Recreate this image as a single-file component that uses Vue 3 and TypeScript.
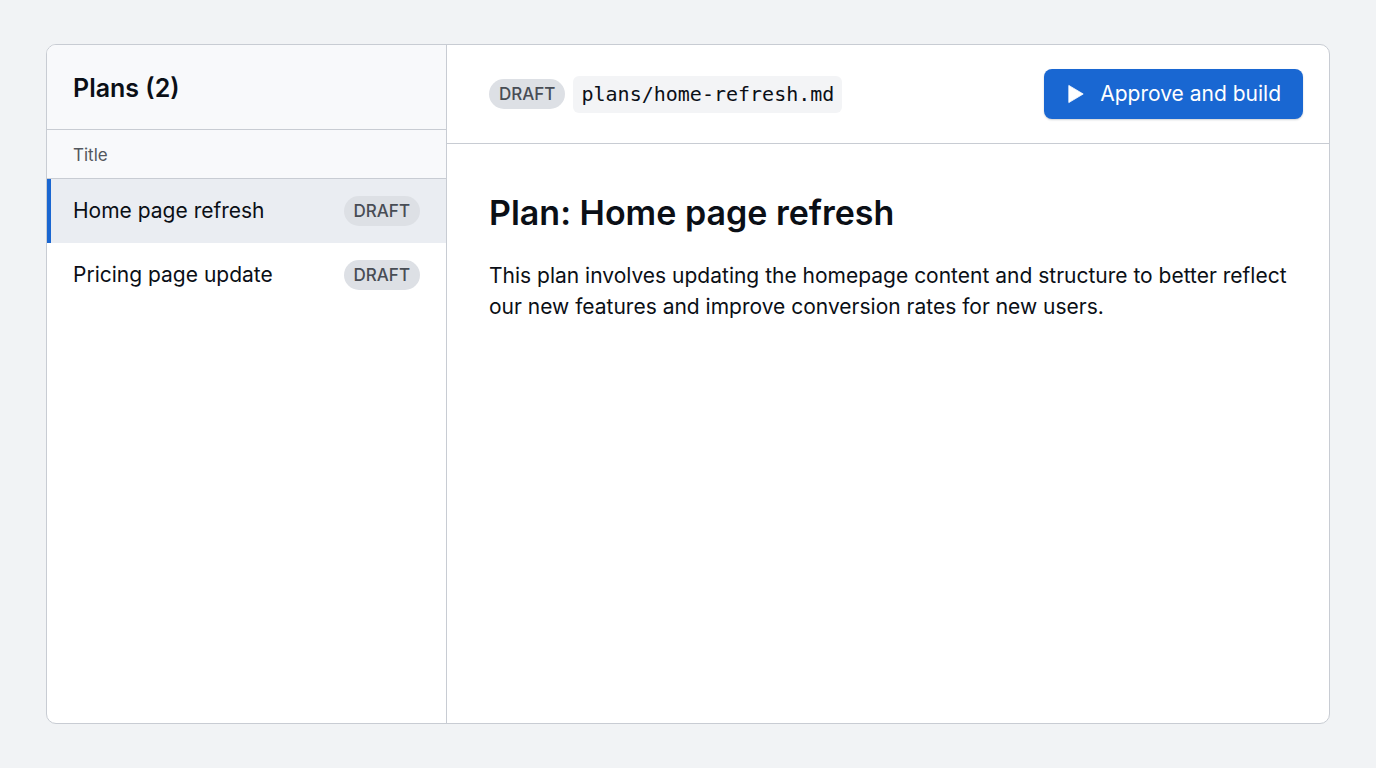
<script setup lang="ts">
import { ref, computed } from 'vue'

interface Plan {
  title: string
  status: string
  file: string
  body: string
}

const plans: Plan[] = [
  {
    title: 'Home page refresh',
    status: 'DRAFT',
    file: 'plans/home-refresh.md',
    body: 'This plan involves updating the homepage content and structure to better reflect our new features and improve conversion rates for new users.',
  },
  { title: 'Pricing page update', status: 'DRAFT', file: 'plans/pricing-update.md', body: '' },
]

const selected = ref(0)
const current = computed(() => plans[selected.value])
</script>

<template>
  <div class="page">
    <main class="window">
      <aside class="sidebar">
        <h2 class="sidebar-title">Plans ({{ plans.length }})</h2>
        <div class="column-label">Title</div>
        <ul class="list">
          <li v-for="(plan, i) in plans" :key="plan.file">
            <button
              type="button"
              class="row"
              :class="{ active: i === selected }"
              :aria-pressed="i === selected"
              @click="selected = i"
            >
              <span>{{ plan.title }}</span>
              <span class="badge">{{ plan.status }}</span>
            </button>
          </li>
        </ul>
      </aside>
      <section class="detail">
        <header class="toolbar">
          <span class="badge">{{ current.status }}</span>
          <code class="file">{{ current.file }}</code>
          <button type="button" class="approve">
            <svg width="16" height="20" viewBox="0 0 16 20" aria-hidden="true">
              <path d="M0.8 1.4v17.2L15.2 10z" fill="currentColor" stroke="currentColor" stroke-width="0.8" stroke-linejoin="round" />
            </svg>
            <span>Approve and build</span>
          </button>
        </header>
        <article class="content">
          <h1>Plan: {{ current.title }}</h1>
          <p>{{ current.body }}</p>
        </article>
      </section>
    </main>
  </div>
</template>

<style>
body {
  background: #f1f3f5;
}
</style>

<style scoped>
.page {
  box-sizing: border-box;
  min-height: 100vh;
  padding: 44px 46px;
  display: flex;
  background: #f1f3f5;
  color: #0b0f16;
  font-family: Inter, "Liberation Sans", sans-serif;
  font-size: 21px;
}
.window {
  flex: 1;
  display: grid;
  grid-template-columns: 400px minmax(0, 1fr);
  background: #fff;
  border: 1px solid #c8ccd3;
  border-radius: 10px;
  overflow: hidden;
}
.sidebar {
  border-right: 1px solid #c8ccd3;
}
.sidebar-title {
  margin: 0;
  padding: 27px 26px 25px;
  font-size: 25px;
  line-height: 32px;
  font-weight: 600;
  background: #f8f9fb;
  border-bottom: 1px solid #c8ccd3;
}
.column-label {
  padding: 13px 26px 11px;
  font-size: 17px;
  line-height: 24px;
  color: #53575e;
  background: #f8f9fb;
  border-bottom: 1px solid #c8ccd3;
}
.list {
  list-style: none;
  margin: 0;
  padding: 0;
}
.row {
  width: 100%;
  display: flex;
  align-items: center;
  justify-content: space-between;
  padding: 16px 26px 16px 22px;
  border: 0;
  border-left: 4px solid transparent;
  background: none;
  color: inherit;
  font: inherit;
  line-height: 32px;
  text-align: left;
  cursor: pointer;
}
.row.active {
  background: #eaedf2;
  border-left-color: #1a66d1;
}
.badge {
  padding: 0 10px;
  border-radius: 15px;
  background: #dde0e5;
  color: #484d55;
  font-size: 17px;
  line-height: 30px;
  font-weight: 500;
}
.toolbar {
  display: flex;
  align-items: center;
  gap: 8px;
  padding: 24px 26px 24px 42px;
  border-bottom: 1px solid #c8ccd3;
}
.file {
  padding: 0 8px;
  border-radius: 6px;
  background: #f3f4f6;
  font-family: "DejaVu Sans Mono", monospace;
  font-size: 20px;
  line-height: 37px;
}
.approve {
  margin-left: auto;
  display: flex;
  align-items: center;
  gap: 16px;
  padding: 0 22px 0 24px;
  border: 0;
  border-radius: 8px;
  background: #1967d2;
  color: #fff;
  font: inherit;
  line-height: 50px;
  cursor: pointer;
  box-shadow: 0 1px 2px rgba(16, 24, 40, 0.2);
}
.content {
  padding: 44px 42px;
}
h1 {
  margin: 0 0 22px;
  font-size: 34px;
  line-height: 50px;
  font-weight: 600;
}
p {
  margin: 0;
  line-height: 31px;
}
</style>
